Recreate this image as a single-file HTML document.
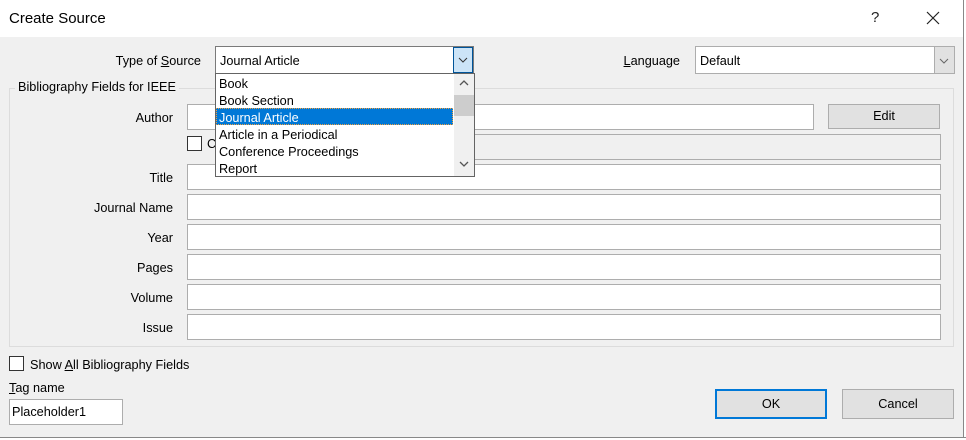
<!DOCTYPE html>
<html><head><style>
*{box-sizing:border-box;margin:0;padding:0}
body{width:966px;height:440px;background:#f0f0f0;font-family:"Liberation Sans",sans-serif;font-size:12.7px;color:#000;position:relative;overflow:hidden}
.a{position:absolute}
.in{position:absolute;background:#fff;border:1px solid #adadad}
.lbl{position:absolute;text-align:right;width:160px;line-height:14px}
.btn{position:absolute;background:#e1e1e1;border:1px solid #adadad;text-align:center}
</style></head><body>
<div class="a" style="left:0;top:0;width:966px;height:37px;background:#fff"></div>
<div class="a" style="left:9px;top:10px;font-size:15px">Create Source</div>
<div class="a" style="left:871px;top:9px;font-size:15px;color:#222">?</div>
<svg class="a" style="left:926px;top:11px" width="14" height="14"><path d="M1 1L13 13M13 1L1 13" stroke="#222" stroke-width="1.2"/></svg>
<div class="a" style="left:963px;top:0;width:3px;height:440px;background:#fff;border-left:1px solid #888"></div>
<div class="a" style="left:0;top:437px;width:966px;height:3px;background:#fff;border-top:1px solid #888"></div>

<div class="lbl" style="left:41px;top:54px">Type of <u>S</u>ource</div>
<div class="in" style="left:215px;top:46px;width:259px;height:28px;border-color:#7a7a7a"><span class="a" style="left:4px;top:7px">Journal Article</span></div>
<div class="a" style="left:453px;top:47px;width:20px;height:26px;background:#cce4f7;border:1px solid #005499"></div>
<svg class="a" style="left:458px;top:57px" width="10" height="6"><path d="M1 1L5 5L9 1" stroke="#333" fill="none"/></svg>

<div class="lbl" style="left:520px;top:54px"><u>L</u>anguage</div>
<div class="in" style="left:695px;top:46px;width:260px;height:28px"><span class="a" style="left:4px;top:7px">Default</span></div>
<div class="a" style="left:934px;top:47px;width:20px;height:26px;background:#e1e1e1;border-left:1px solid #adadad"></div>
<svg class="a" style="left:939px;top:58px" width="10" height="6"><path d="M1 1L5 5L9 1" stroke="#666" fill="none"/></svg>

<div class="a" style="left:9px;top:88px;width:945px;height:259px;border:1px solid #dcdcdc"></div>
<div class="a" style="left:15px;top:80px;padding:0 3px;background:#f0f0f0">Bibliography Fields for IEEE</div>

<div class="lbl" style="left:13px;top:111px">Author</div>
<div class="in" style="left:187px;top:104px;width:627px;height:26px"></div>
<div class="btn" style="left:828px;top:104px;width:112px;height:25px;line-height:23px">Edit</div>
<div class="a" style="left:187px;top:136px;width:15px;height:15px;background:#fff;border:1px solid #333"></div>
<div class="a" style="left:207px;top:137px">C</div>
<div class="a" style="left:275px;top:134px;width:666px;height:26px;border:1px solid #adadad;background:#f0f0f0"></div>

<div class="lbl" style="left:13px;top:171px">Title</div>
<div class="in" style="left:187px;top:164px;width:754px;height:26px"></div>
<div class="lbl" style="left:13px;top:201px">Journal Name</div>
<div class="in" style="left:187px;top:194px;width:754px;height:26px"></div>
<div class="lbl" style="left:13px;top:231px">Year</div>
<div class="in" style="left:187px;top:224px;width:754px;height:26px"></div>
<div class="lbl" style="left:13px;top:261px">Pages</div>
<div class="in" style="left:187px;top:254px;width:754px;height:26px"></div>
<div class="lbl" style="left:13px;top:291px">Volume</div>
<div class="in" style="left:187px;top:284px;width:754px;height:26px"></div>
<div class="lbl" style="left:13px;top:321px">Issue</div>
<div class="in" style="left:187px;top:314px;width:754px;height:26px"></div>

<div class="a" style="left:215px;top:73px;width:260px;height:104px;background:#fff;border:1px solid #646464"></div>
<div class="a" style="left:454px;top:74px;width:20px;height:102px;background:#f0f0f0"></div>
<div class="a" style="left:454px;top:95px;width:20px;height:21px;background:#cdcdcd"></div>
<svg class="a" style="left:459px;top:80px" width="10" height="6"><path d="M1 5L5 1L9 5" stroke="#555" stroke-width="1.3" fill="none"/></svg>
<svg class="a" style="left:459px;top:161px" width="10" height="6"><path d="M1 1L5 5L9 1" stroke="#555" stroke-width="1.3" fill="none"/></svg>
<div class="a" style="left:216px;top:108px;width:237px;height:17px;background:#0078d7;border:1px dotted #f0a040"></div>
<div class="a" style="left:219px;top:76px;line-height:17px">Book<br>Book Section<br><span style="color:#fff">Journal Article</span><br>Article in a Periodical<br>Conference Proceedings<br>Report</div>

<div class="a" style="left:9px;top:356px;width:15px;height:15px;background:#fff;border:1px solid #333"></div>
<div class="a" style="left:30px;top:358px">Show <u>A</u>ll Bibliography Fields</div>
<div class="a" style="left:9px;top:381px"><u>T</u>ag name</div>
<div class="in" style="left:9px;top:399px;width:114px;height:26px"><span class="a" style="left:2px;top:5px">Placeholder1</span></div>
<div class="btn" style="left:715px;top:389px;width:112px;height:30px;line-height:26px;border:2px solid #0078d7">OK</div>
<div class="btn" style="left:842px;top:389px;width:112px;height:30px;line-height:28px">Cancel</div>
</body></html>
